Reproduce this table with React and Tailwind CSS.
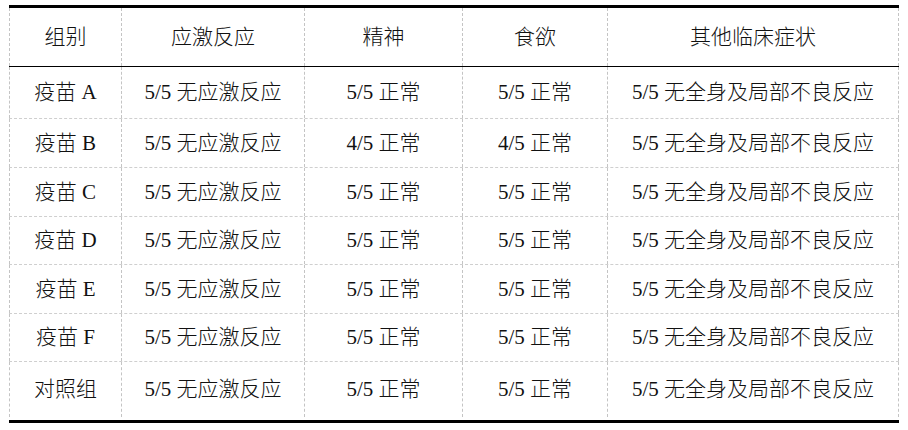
import React from "react";

const cols = [
  "w-[112px]",
  "w-[183px]",
  "w-[158px]",
  "w-[145px]",
  "w-[292px]",
];

const header = ["组别", "应激反应", "精神", "食欲", "其他临床症状"];

const rows = [
  { h: "h-[52px]", cells: ["疫苗 A", "5/5 无应激反应", "5/5 正常", "5/5 正常", "5/5 无全身及局部不良反应"] },
  { h: "h-[49px]", cells: ["疫苗 B", "5/5 无应激反应", "4/5 正常", "4/5 正常", "5/5 无全身及局部不良反应"] },
  { h: "h-[49px]", cells: ["疫苗 C", "5/5 无应激反应", "5/5 正常", "5/5 正常", "5/5 无全身及局部不良反应"] },
  { h: "h-[48px]", cells: ["疫苗 D", "5/5 无应激反应", "5/5 正常", "5/5 正常", "5/5 无全身及局部不良反应"] },
  { h: "h-[49px]", cells: ["疫苗 E", "5/5 无应激反应", "5/5 正常", "5/5 正常", "5/5 无全身及局部不良反应"] },
  { h: "h-[48px]", cells: ["疫苗 F", "5/5 无应激反应", "5/5 正常", "5/5 正常", "5/5 无全身及局部不良反应"] },
  { h: "h-[58px]", cells: ["对照组", "5/5 无应激反应", "5/5 正常", "5/5 正常", "5/5 无全身及局部不良反应"] },
];

function Row({ cells, h, last, headerRow }) {
  return (
    <div
      className={`flex ${h} ${
        headerRow
          ? "border-b border-black"
          : last
          ? "pb-[3px]"
          : "border-b border-dashed border-[#cfcfcf]"
      }`}
    >
      {cells.map((c, i) => (
        <div
          key={i}
          className={`${cols[i]} flex items-center justify-center border-l border-dashed border-[#c4c4c4] ${
            i === cells.length - 1 ? "border-r" : ""
          }`}
        >
          <span className="whitespace-pre">{c}</span>
        </div>
      ))}
    </div>
  );
}

export default function App() {
  return (
    <div
      className="w-[908px] h-[430px] bg-white pt-[5px] pl-[9px] text-[21px] text-[#111] leading-none font-light"
      style={{ fontFamily: '"Liberation Serif", "Noto Sans CJK SC", serif' }}
    >
      <div className="w-[890px] border-t-[3px] border-b-[3px] border-black">
        <Row cells={header} h="h-[59px]" headerRow />
        {rows.map((r, i) => (
          <Row key={i} cells={r.cells} h={r.h} last={i === rows.length - 1} />
        ))}
      </div>
    </div>
  );
}
